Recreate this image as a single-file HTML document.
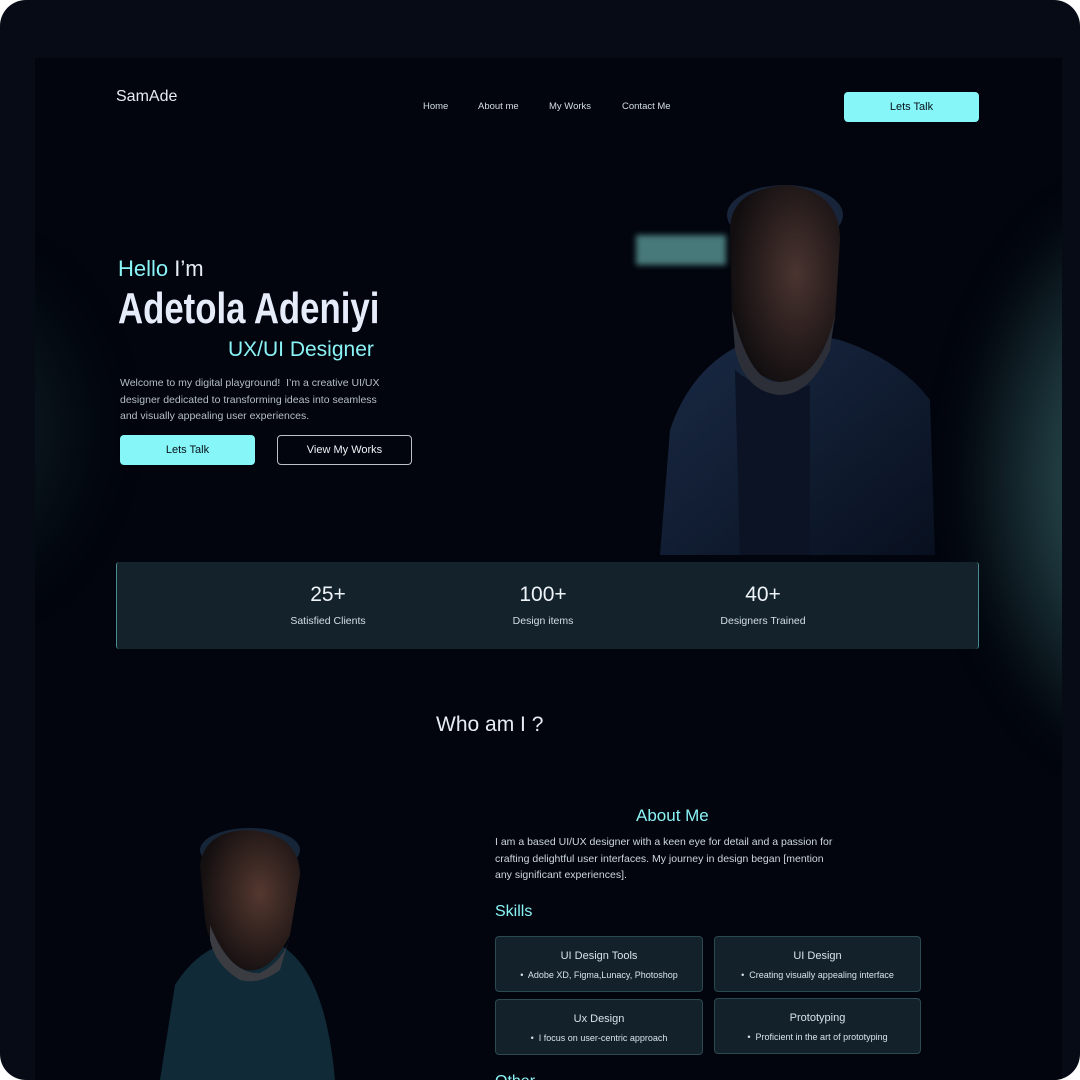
<!DOCTYPE html>
<html><head><meta charset="utf-8"><style>
*{margin:0;padding:0;box-sizing:border-box}
body{width:1080px;height:1080px;background:#fff;font-family:"Liberation Sans",sans-serif;overflow:hidden;position:relative}
.outer{position:absolute;left:0;top:0;width:1080px;height:1080px;background:#060b15;border-radius:26px;overflow:hidden}
.inner{position:absolute;left:35px;top:58px;width:1027px;height:1022px;background:#02050d;overflow:hidden}
.glowR{position:absolute;left:920px;top:120px;width:220px;height:600px;background:radial-gradient(ellipse at 90% 50%,#3a6265 0%,#1f3b40 35%,rgba(2,5,13,0) 70%);filter:blur(20px)}
.glowL{position:absolute;left:-80px;top:180px;width:160px;height:380px;background:radial-gradient(ellipse at 0% 50%,#112329 0%,rgba(2,5,13,0) 70%);filter:blur(20px)}
.t{position:absolute;white-space:nowrap}
.btn{position:absolute;border-radius:4px;font-size:11px;display:flex;align-items:center;justify-content:center}
.card{position:absolute;background:#13222a;border:1px solid #2a4950;border-radius:4px;color:#d8e2ea;text-align:center}
.card b{display:block;font-weight:normal;font-size:11px;margin-top:13px}
.card i{display:block;font-style:normal;font-size:9px;margin-top:8px}
</style></head><body>
<div class="outer">
<div class="inner">
<div class="glowR"></div><div class="glowL"></div>
</div>
<div class="t" style="left:116px;top:88px;font-size:16px;color:#e6ecf2">SamAde</div>
<div class="t" style="left:423px;top:101px;font-size:9.5px;color:#d5dde6">Home</div>
<div class="t" style="left:478px;top:101px;font-size:9.5px;color:#d5dde6">About me</div>
<div class="t" style="left:549px;top:101px;font-size:9.5px;color:#d5dde6">My Works</div>
<div class="t" style="left:622px;top:101px;font-size:9.5px;color:#d5dde6">Contact Me</div>
<div class="btn" style="left:844px;top:92px;width:135px;height:30px;background:#86f6f8;color:#07121a">Lets Talk</div>

<div style="position:absolute;left:636px;top:235px;width:90px;height:30px;background:#47797a;filter:blur(3px)"></div>
<svg style="position:absolute;left:640px;top:170px" width="300" height="390" viewBox="0 0 300 390">
<defs><linearGradient id="j" x1="0" y1="0" x2="1" y2="1"><stop offset="0" stop-color="#1a2a45"/><stop offset="1" stop-color="#08101f"/></linearGradient>
<radialGradient id="f" cx="0.6" cy="0.45" r="0.6"><stop offset="0" stop-color="#4a3430"/><stop offset="1" stop-color="#120e10"/></radialGradient></defs>
<path d="M20 385 L30 260 Q50 200 100 175 L150 160 L200 170 Q260 190 290 230 L295 385 Z" fill="url(#j)"/>
<path d="M95 200 Q130 230 170 215 L170 385 L100 385 Z" fill="#0b1324"/>
<ellipse cx="145" cy="45" rx="58" ry="30" fill="#17243a"/>
<path d="M90 60 Q90 20 145 15 Q200 20 200 70 L195 150 Q175 215 140 212 Q100 205 92 150 Z" fill="url(#f)"/>
<path d="M92 140 Q110 215 140 212 Q180 210 195 145 L190 180 Q170 225 140 225 Q105 222 95 180 Z" fill="#2c2f37"/>
</svg>

<div class="t" style="left:118px;top:256px;font-size:22px;color:#e8eef6"><span style="color:#8af3f6">Hello</span> I’m</div>
<div class="t" style="left:118px;top:284px;font-size:44px;font-weight:bold;color:#e6ecfa;transform:scaleX(0.79);transform-origin:left">Adetola Adeniyi</div>
<div class="t" style="left:228px;top:338px;font-size:21px;color:#8af3f6">UX/UI Designer</div>
<div class="t" style="left:120px;top:375px;font-size:10.5px;line-height:16.5px;color:#b6bfc9">Welcome to my digital playground!&nbsp; I’m a creative UI/UX<br>designer dedicated to transforming ideas into seamless<br>and visually appealing user experiences.</div>
<div class="btn" style="left:120px;top:435px;width:135px;height:30px;background:#86f6f8;color:#07121a">Lets Talk</div>
<div class="btn" style="left:277px;top:435px;width:135px;height:30px;border:1px solid #b9c0c8;color:#eef2f6">View My Works</div>

<div style="position:absolute;left:116px;top:562px;width:863px;height:87px;background:#14232b;border-left:1px solid #4a8c92;border-right:1px solid #4a8c92;border-radius:3px"></div>
<div class="t" style="left:268px;top:583px;width:120px;text-align:center;font-size:21px;color:#eef3f8">25+</div>
<div class="t" style="left:268px;top:615px;width:120px;text-align:center;font-size:10.5px;color:#d5dde6">Satisfied Clients</div>
<div class="t" style="left:483px;top:583px;width:120px;text-align:center;font-size:21px;color:#eef3f8">100+</div>
<div class="t" style="left:483px;top:615px;width:120px;text-align:center;font-size:10.5px;color:#d5dde6">Design items</div>
<div class="t" style="left:703px;top:583px;width:120px;text-align:center;font-size:21px;color:#eef3f8">40+</div>
<div class="t" style="left:703px;top:615px;width:120px;text-align:center;font-size:10.5px;color:#d5dde6">Designers Trained</div>

<div class="t" style="left:436px;top:713px;font-size:21px;color:#e6ecf5">Who am I ?</div>

<svg style="position:absolute;left:150px;top:825px" width="200" height="255" viewBox="0 0 200 255">
<defs><radialGradient id="f2" cx="0.6" cy="0.45" r="0.6"><stop offset="0" stop-color="#54382f"/><stop offset="1" stop-color="#140f10"/></radialGradient></defs>
<path d="M10 255 L25 160 Q50 120 90 115 L130 120 Q175 145 185 255 Z" fill="#102a38"/>
<ellipse cx="100" cy="25" rx="50" ry="22" fill="#172538"/>
<path d="M50 40 Q55 5 100 5 Q150 10 150 50 L140 110 Q120 150 95 145 Q60 130 55 95 Z" fill="url(#f2)"/>
<path d="M60 100 Q80 150 110 148 Q135 135 140 110 L130 145 Q110 160 90 155 Q65 140 60 115Z" fill="#3a3c42"/>
</svg>

<div class="t" style="left:636px;top:806px;font-size:17px;color:#8af3f6">About Me</div>
<div class="t" style="left:495px;top:834px;font-size:10.5px;line-height:16.5px;color:#cfd7e0">I am a based UI/UX designer with a keen eye for detail and a passion for<br>crafting delightful user interfaces. My journey in design began [mention<br>any significant experiences].</div>
<div class="t" style="left:495px;top:903px;font-size:16px;color:#8af3f6">Skills</div>
<div class="card" style="left:495px;top:936px;width:208px;height:56px"><b>UI Design Tools</b><i>•&nbsp; Adobe XD, Figma,Lunacy, Photoshop</i></div>
<div class="card" style="left:714px;top:936px;width:207px;height:56px"><b>UI Design</b><i>•&nbsp; Creating visually appealing interface</i></div>
<div class="card" style="left:495px;top:999px;width:208px;height:56px"><b>Ux Design</b><i>•&nbsp; I focus on user-centric approach</i></div>
<div class="card" style="left:714px;top:998px;width:207px;height:56px"><b>Prototyping</b><i>•&nbsp; Proficient in the art of prototyping</i></div>
<div class="t" style="left:495px;top:1073px;font-size:16px;color:#8af3f6">Other</div>
</div>
</body></html>
